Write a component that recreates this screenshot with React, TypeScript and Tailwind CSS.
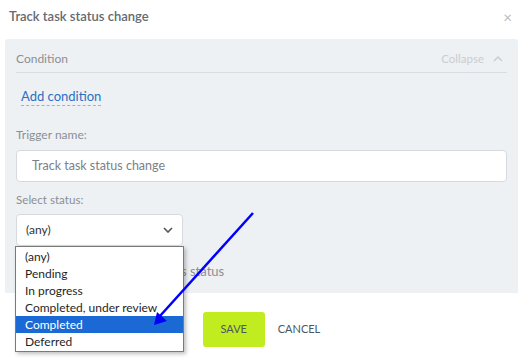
import React from "react";

const statuses = ["(any)", "Pending", "In progress", "Completed, under review", "Completed", "Deferred"];

const App: React.FC = () => {
  return (
    <div className="relative w-[523px] h-[361px] overflow-hidden bg-white font-['Lato',sans-serif]">
      {/* Header */}
      <header className="flex h-[39px] items-center justify-between pb-[5px] pl-[9px] pr-[11px]">
        <h1 className="text-[13px] font-semibold text-[#636a72]">Track task status change</h1>
        <span className="text-[15px] leading-none text-[#b9bdc1]">×</span>
      </header>

      {/* Condition panel */}
      <div className="mx-[5px] h-[254px] rounded-t-[3px] bg-[#eef1f4] px-[11px]">
        <div className="flex h-[34px] items-center justify-between border-b border-[#d9dde2] pt-[7px]">
          <span className="text-[12px] text-[#8a8f95]">Condition</span>
          <span className="flex items-center gap-[9px] pr-[4px] text-[11.5px] text-[#c9cdd1]">
            Collapse
            <svg width="10" height="6" viewBox="0 0 10 6" fill="none" stroke="#c9cdd1" strokeWidth="1.5">
              <path d="M1 5l4-4 4 4" />
            </svg>
          </span>
        </div>

        <div className="pt-[12px] pl-[5px] leading-[20px]">
          <span className="border-b border-dashed border-[#8fb4e3] pb-[1px] text-[13px] text-[#2b6fc2]">
            Add condition
          </span>
        </div>

        <div className="pt-[21px] text-[12px] leading-[16px] text-[#8a8f95]">Trigger name:</div>
        <div className="mt-[7px] flex h-[32px] items-center rounded-[4px] border border-[#d6dadf] bg-white pl-[15px] text-[12.5px] text-[#7b8188]">
          Track task status change
        </div>

        <div className="pt-[10px] text-[11.6px] leading-[16px] text-[#8a8f95]">Select status:</div>
        <div className="mt-[6px] flex h-[32px] w-[167px] items-center justify-between rounded-[4px] border border-[#d6dadf] bg-white pl-[9px] pr-[9px] text-[12px] text-[#333]">
          (any)
          <svg width="10" height="6" viewBox="0 0 10 6" fill="none" stroke="#555" strokeWidth="1.6">
            <path d="M1 1l4 4 4-4" />
          </svg>
        </div>

        <div className="flex items-center gap-[6px] pt-[16px] text-[13px] leading-[18px] text-[#8a8f95]">
          <span className="inline-block h-[13px] w-[13px] rounded-[2px] border border-[#c3c8cd] bg-white" />
          Ignore a return to previous status
        </div>
      </div>

      {/* Footer */}
      <footer className="mt-[19px] flex items-center justify-center gap-[13px]">
        <button className="h-[35px] w-[62px] rounded-[3px] bg-[#c1ec1f] text-[11px] text-[#4b5662]">SAVE</button>
        <button className="text-[11px] text-[#4b5662]">CANCEL</button>
      </footer>

      {/* Open native dropdown list */}
      <ul className="absolute left-[15px] top-[246px] w-[169px] border border-[#7a7a7a] bg-white py-[1px] text-[12px] text-[#1f1f1f] shadow-[2px_2px_4px_rgba(0,0,0,0.25)]">
        {statuses.map((s) => (
          <li
            key={s}
            className={
              s === "Completed"
                ? "h-[17px] bg-[#1a69d4] pl-[9px] leading-[17px] text-white"
                : "h-[17px] pl-[9px] leading-[17px]"
            }
          >
            {s}
          </li>
        ))}
      </ul>

      {/* Annotation arrow */}
      <svg className="pointer-events-none absolute left-0 top-0" width="523" height="361">
        <line x1="253" y1="213" x2="160" y2="316" stroke="#0000ff" strokeWidth="2.5" />
        <polygon points="154,325 157,312 167,321" fill="#0000ff" />
      </svg>
    </div>
  );
};

export default App;
